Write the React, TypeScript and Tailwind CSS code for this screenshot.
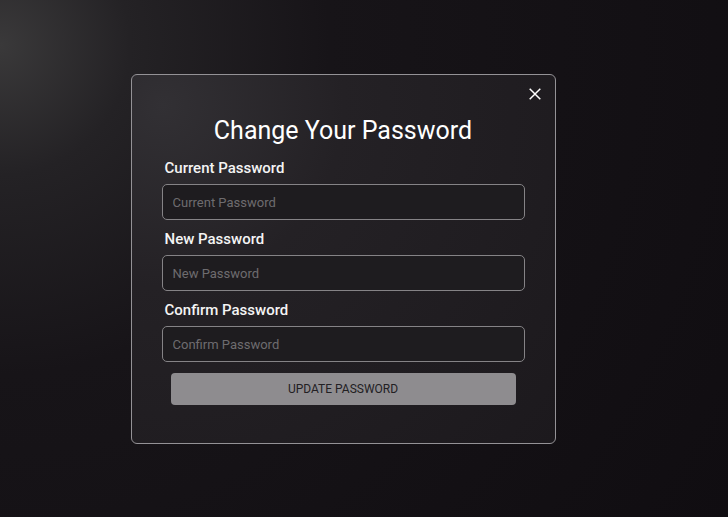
import { useState } from "react";

const fields = [
  { label: "Current Password", name: "current" },
  { label: "New Password", name: "new" },
  { label: "Confirm Password", name: "confirm" },
];

function App() {
  const [values, setValues] = useState<Record<string, string>>({});

  return (
    <div className="min-h-screen w-full flex items-center justify-center pr-[42px] bg-[#100d11] bg-[radial-gradient(circle_at_0px_45px,#3a393a_0%,#242225_15%,#171418_38%,#100d11_100%)] font-['Roboto',sans-serif]">
      <div className="relative w-[425px] h-[370px] rounded-[6px] border-[1.5px] border-[#949296] bg-[radial-gradient(circle_at_30px_30px,#323034_0%,#242125_35%,#1c191d_100%)] px-[30px] pt-[40px]">
        <button className="absolute top-[11px] right-[12px] w-[16px] h-[16px] flex items-center justify-center text-white">
          <svg width="12" height="12" viewBox="0 0 12 12" fill="none">
            <path d="M0.7 0.7L11.3 11.3M11.3 0.7L0.7 11.3" stroke="white" strokeWidth="1.5" />
          </svg>
        </button>
        <h2 className="text-center text-white text-[25px] leading-[32px]">
          Change Your Password
        </h2>
        <div className="mt-[10px] flex flex-col gap-[8px]">
          {fields.map((f) => (
            <div key={f.name} className="flex flex-col gap-[5px]">
              <label className="pl-[3px] text-[#f4f4f4] text-[15px] leading-[22px] font-medium">
                {f.label}
              </label>
              <input
                type="password"
                placeholder={f.label}
                value={values[f.name] ?? ""}
                onChange={(e) => setValues({ ...values, [f.name]: e.target.value })}
                className="h-[36px] w-full rounded-[5px] border border-[#858386] bg-[#1e1c1f] px-[10px] pt-[2px] text-[13px] text-white placeholder:text-[#6e6c6f] outline-none"
              />
            </div>
          ))}
        </div>
        <div className="mt-[11px] px-[9px]">
          <button className="h-[32px] w-full rounded-[4px] bg-[#8e8c8f] text-[12px] text-[#222023] uppercase">
            Update Password
          </button>
        </div>
      </div>
    </div>
  );
}
export default App;
